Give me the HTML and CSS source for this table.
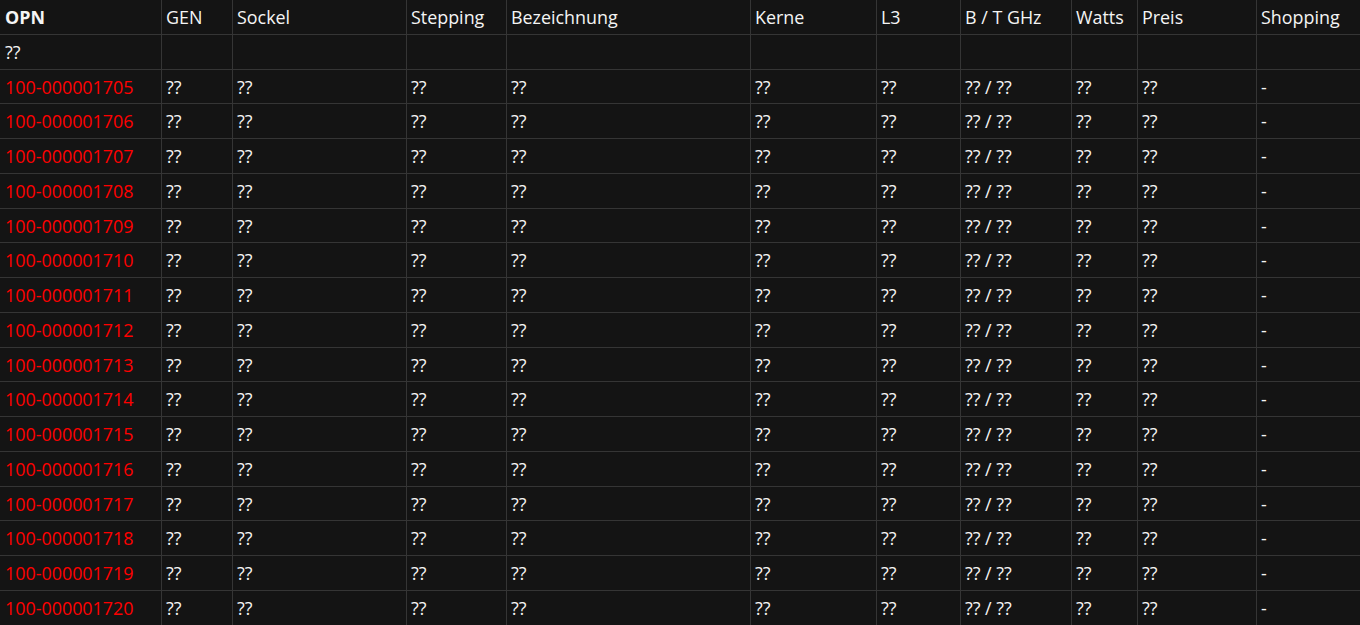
FILE: index.html
```html
<!DOCTYPE html>
<html lang="de">
<head>
<meta charset="utf-8">
<title>OPN Tabelle</title>
<link rel="stylesheet" href="styles.css">
</head>
<body>
<table class="cpu-table">
  <colgroup>
    <col class="c-opn"><col class="c-gen"><col class="c-sockel"><col class="c-step"><col class="c-bez"><col class="c-kerne"><col class="c-l3"><col class="c-ghz"><col class="c-watts"><col class="c-preis"><col class="c-shop">
  </colgroup>
  <thead>
    <tr>
      <th class="opn-head">OPN</th><th>GEN</th><th>Sockel</th><th>Stepping</th><th>Bezeichnung</th><th>Kerne</th><th>L3</th><th>B / T GHz</th><th>Watts</th><th>Preis</th><th>Shopping</th>
    </tr>
  </thead>
  <tbody id="rows">
    <tr><td>??</td><td></td><td></td><td></td><td></td><td></td><td></td><td></td><td></td><td></td><td></td></tr>
  </tbody>
</table>
<script src="script.js"></script>
</body>
</html>
```

FILE: script.js
```js
(function () {
  var tbody = document.getElementById('rows');
  var html = '';
  for (var n = 1705; n <= 1720; n++) {
    html += '<tr>' +
      '<td class="opn">100-00000' + n + '</td>' +
      '<td>??</td><td>??</td><td>??</td><td>??</td><td>??</td><td>??</td>' +
      '<td>?? / ??</td><td>??</td><td>??</td><td class="shop">-</td>' +
      '</tr>';
  }
  tbody.insertAdjacentHTML('beforeend', html);
})();
```

FILE: styles.css
```css
html, body {
  margin: 0;
  padding: 0;
  background: #141414;
}
body {
  font-family: "Open Sans", "Noto Sans", sans-serif;
  font-size: 17.9px;
  color: #f5f5f5;
  overflow: hidden;
}
.cpu-table {
  width: 1360px;
  table-layout: fixed;
  border-collapse: separate;
  border-spacing: 0;
}
.c-opn { width: 162px; }
.c-gen { width: 71px; }
.c-sockel { width: 174px; }
.c-step { width: 100px; }
.c-bez { width: 244px; }
.c-kerne { width: 126px; }
.c-l3 { width: 84px; }
.c-ghz { width: 111px; }
.c-watts { width: 66px; }
.c-preis { width: 119px; }
.c-shop { width: 103px; }
.cpu-table th,
.cpu-table td {
  box-sizing: border-box;
  text-align: left;
  font-weight: normal;
  line-height: 23.75px;
  padding: 6px 4px 4px 4px;
  border-right: 1px solid #353535;
  border-bottom: 1px solid #353535;
  white-space: nowrap;
  overflow: hidden;
}
.cpu-table th:first-child,
.cpu-table td:first-child {
  padding-left: 5px;
}
.cpu-table th:last-child,
.cpu-table td:last-child {
  border-right: none;
}
.cpu-table th.opn-head {
  font-weight: bold;
}
.cpu-table td.opn {
  color: #ff0000;
}
```
